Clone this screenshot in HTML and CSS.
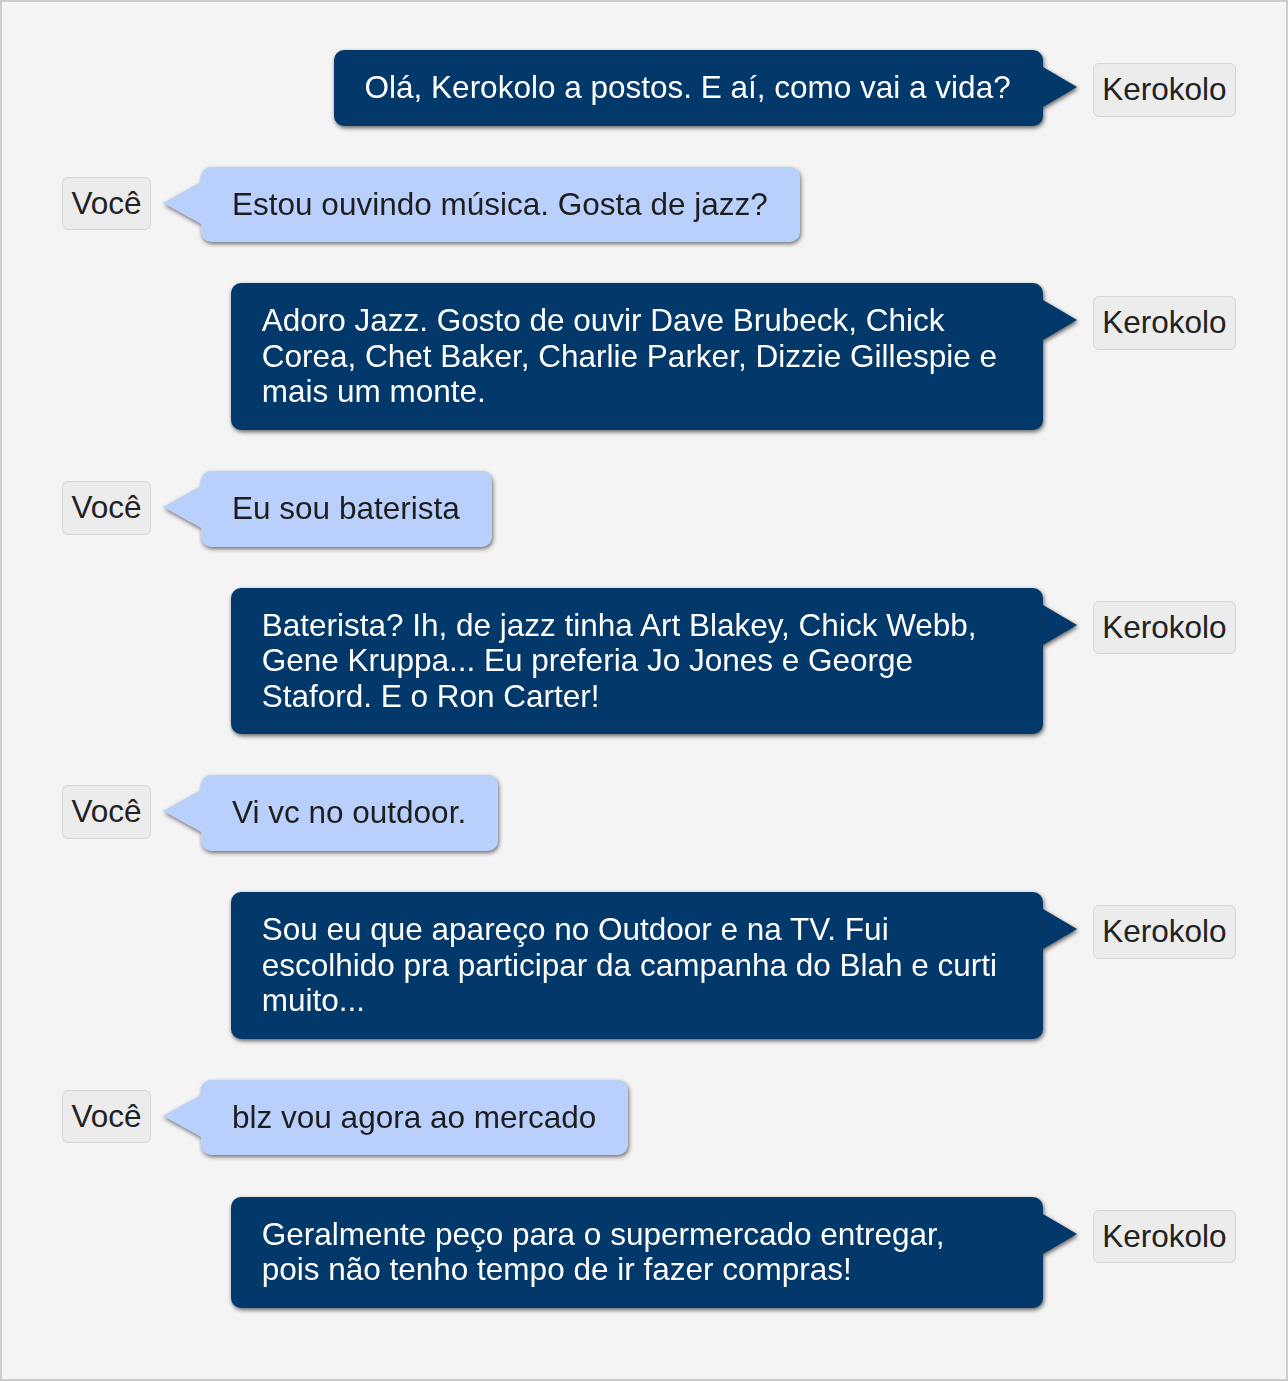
FILE: index.html
```
<!DOCTYPE html>
<html lang="pt-BR">
<head>
<meta charset="utf-8">
<title>Kerokolo</title>
<link rel="stylesheet" href="styles.css">
</head>
<body>
<div class="chat">
  <div class="row bot">
    <div class="bubble">Olá, Kerokolo a postos. E aí, como vai a vida?</div>
    <div class="label">Kerokolo</div>
  </div>
  <div class="row user">
    <div class="label">Você</div>
    <div class="bubble">Estou ouvindo música. Gosta de jazz?</div>
  </div>
  <div class="row bot">
    <div class="bubble">Adoro Jazz. Gosto de ouvir Dave Brubeck, Chick Corea, Chet Baker, Charlie Parker, Dizzie Gillespie e mais um monte.</div>
    <div class="label">Kerokolo</div>
  </div>
  <div class="row user">
    <div class="label">Você</div>
    <div class="bubble">Eu sou baterista</div>
  </div>
  <div class="row bot">
    <div class="bubble">Baterista? Ih, de jazz tinha Art Blakey, Chick Webb, Gene Kruppa... Eu preferia Jo Jones e George Staford. E o Ron Carter!</div>
    <div class="label">Kerokolo</div>
  </div>
  <div class="row user">
    <div class="label">Você</div>
    <div class="bubble">Vi vc no outdoor.</div>
  </div>
  <div class="row bot">
    <div class="bubble">Sou eu que apareço no Outdoor e na TV. Fui escolhido pra participar da campanha do Blah e curti muito...</div>
    <div class="label">Kerokolo</div>
  </div>
  <div class="row user">
    <div class="label">Você</div>
    <div class="bubble">blz vou agora ao mercado</div>
  </div>
  <div class="row bot">
    <div class="bubble">Geralmente peço para o supermercado entregar, pois não tenho tempo de ir fazer compras!</div>
    <div class="label">Kerokolo</div>
  </div>
</div>
</body>
</html>
```
FILE: styles.css
```
* { box-sizing: border-box; }
body {
  margin: 0;
  font-family: "Liberation Sans", Arial, sans-serif;
}
.chat {
  width: 1288px;
  height: 1381px;
  border: 2px solid #cdcdcd;
  background: #f4f4f4;
  padding: 48px 50px 0 60px;
  display: flex;
  flex-direction: column;
  gap: 41.2px;
}
.row {
  display: flex;
  align-items: flex-start;
}
.row.bot { justify-content: flex-end; }
.row.user { justify-content: flex-start; }
.bubble {
  position: relative;
  font-size: 31.5px;
  line-height: 35.5px;
  padding: 20px 32px 20px 31px;
  border-radius: 10px;
  max-width: 812px;
}
.bot .bubble {
  background: #02386a;
  color: #ffffff;
  filter: drop-shadow(1px 2px 2px rgba(0, 0, 0, 0.6));
}
.bot .bubble::after {
  content: "";
  position: absolute;
  left: 100%;
  top: 17px;
  border-left: 34px solid #02386a;
  border-top: 20px solid transparent;
  border-bottom: 20px solid transparent;
}
.user .bubble {
  background: #b9d0fd;
  color: #1e1e1e;
  filter: drop-shadow(1px 2px 2px rgba(0, 0, 0, 0.55));
}
.user .bubble::before {
  content: "";
  position: absolute;
  right: 100%;
  top: 15px;
  border-right: 38px solid #b9d0fd;
  border-top: 21px solid transparent;
  border-bottom: 21px solid transparent;
}
.label {
  font-size: 31.5px;
  line-height: 35.5px;
  padding: 8px 8.5px;
  border: 1px solid #d6d6d6;
  border-radius: 6px;
  background: #ececec;
  color: #222222;
  flex: none;
}
.bot .label {
  margin-left: 50px;
  margin-top: 13px;
}
.user .label {
  margin-right: 50px;
  margin-top: 10px;
}
```
